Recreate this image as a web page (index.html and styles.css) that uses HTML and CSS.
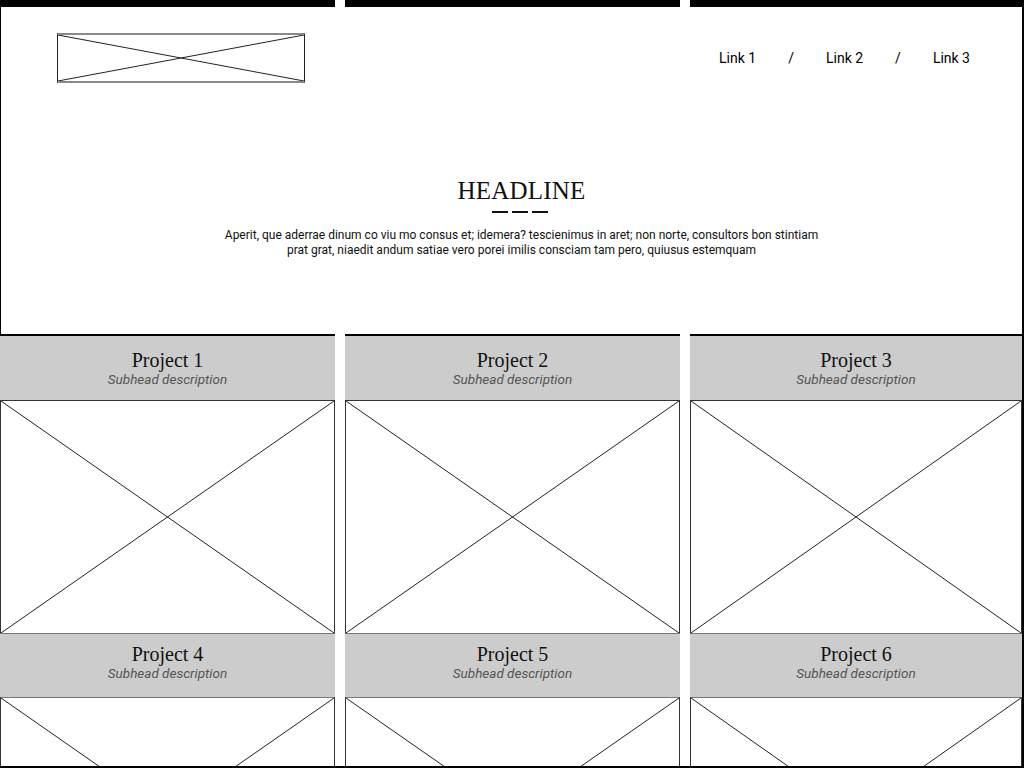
FILE: index.html
```html
<!DOCTYPE html>
<html lang="en">
<head>
    <meta charset="UTF-8">
    <meta name="viewport" content="width=device-width, initial-scale=1.0">
    <title>Portfolio Wireframe</title>
    <link rel="stylesheet" href="styles.css">
</head>
<body>
    <div class="frame">
        <div class="top-bars">
            <span></span>
            <span></span>
            <span></span>
        </div>
        <header class="hero">
            <div class="hero-top">
                <div class="logo">
                    <svg class="cross" viewBox="0 0 100 100" preserveAspectRatio="none">
                        <line x1="0" y1="0" x2="100" y2="100" />
                        <line x1="0" y1="100" x2="100" y2="0" />
                    </svg>
                </div>
                <nav class="nav">
                    <a href="#">Link 1</a>
                    <span class="sep">/</span>
                    <a href="#">Link 2</a>
                    <span class="sep">/</span>
                    <a href="#">Link 3</a>
                </nav>
            </div>
            <div class="intro">
                <h1>HEADLINE</h1>
                <div class="dashes"><span></span><span></span><span></span></div>
                <p>Aperit, que aderrae dinum co viu mo consus et; idemera? tescienimus in aret; non norte, consultors bon stintiam<br>prat grat, niaedit andum satiae vero porei imilis consciam tam pero, quiusus estemquam</p>
            </div>
        </header>
        <section class="projects">
            <div class="card">
                <div class="card-head">
                    <h2>Project 1</h2>
                    <p>Subhead description</p>
                </div>
                <div class="card-img">
                    <svg class="cross" viewBox="0 0 100 100" preserveAspectRatio="none"><line x1="0" y1="0" x2="100" y2="100" /><line x1="0" y1="100" x2="100" y2="0" /></svg>
                </div>
            </div>
            <div class="card">
                <div class="card-head">
                    <h2>Project 2</h2>
                    <p>Subhead description</p>
                </div>
                <div class="card-img">
                    <svg class="cross" viewBox="0 0 100 100" preserveAspectRatio="none"><line x1="0" y1="0" x2="100" y2="100" /><line x1="0" y1="100" x2="100" y2="0" /></svg>
                </div>
            </div>
            <div class="card">
                <div class="card-head">
                    <h2>Project 3</h2>
                    <p>Subhead description</p>
                </div>
                <div class="card-img">
                    <svg class="cross" viewBox="0 0 100 100" preserveAspectRatio="none"><line x1="0" y1="0" x2="100" y2="100" /><line x1="0" y1="100" x2="100" y2="0" /></svg>
                </div>
            </div>
            <div class="card">
                <div class="card-head">
                    <h2>Project 4</h2>
                    <p>Subhead description</p>
                </div>
                <div class="card-img">
                    <svg class="cross" viewBox="0 0 100 100" preserveAspectRatio="none"><line x1="0" y1="0" x2="100" y2="100" /><line x1="0" y1="100" x2="100" y2="0" /></svg>
                </div>
            </div>
            <div class="card">
                <div class="card-head">
                    <h2>Project 5</h2>
                    <p>Subhead description</p>
                </div>
                <div class="card-img">
                    <svg class="cross" viewBox="0 0 100 100" preserveAspectRatio="none"><line x1="0" y1="0" x2="100" y2="100" /><line x1="0" y1="100" x2="100" y2="0" /></svg>
                </div>
            </div>
            <div class="card">
                <div class="card-head">
                    <h2>Project 6</h2>
                    <p>Subhead description</p>
                </div>
                <div class="card-img">
                    <svg class="cross" viewBox="0 0 100 100" preserveAspectRatio="none"><line x1="0" y1="0" x2="100" y2="100" /><line x1="0" y1="100" x2="100" y2="0" /></svg>
                </div>
            </div>
        </section>
    </div>
</body>
</html>
```

FILE: styles.css
```css
body {
    margin: 0;
    background: #fff;
    color: #111;
    font-family: Roboto, "Liberation Sans", sans-serif;
}
.frame {
    width: 1024px;
    height: 768px;
    box-sizing: border-box;
    border-right: 2px solid #000;
    border-bottom: 2px solid #000;
    overflow: hidden;
}
.top-bars, .projects {
    display: grid;
    grid-template-columns: 335px 335px 1fr;
    column-gap: 10px;
}
.top-bars span {
    height: 7px;
    background: #000;
}
.hero {
    height: 327px;
    box-sizing: border-box;
    border-left: 1px solid #000;
    padding: 26px 52px 0 56px;
}
.hero-top {
    display: flex;
    justify-content: space-between;
    align-items: center;
}
.logo {
    width: 248px;
    height: 50px;
    box-sizing: border-box;
    border-left: 1px solid #222;
    border-right: 1px solid #222;
    border-top: 2px solid #8a8a8a;
    border-bottom: 2px solid #8a8a8a;
}
.cross {
    display: block;
    width: 100%;
    height: 100%;
}
.cross line {
    stroke: #222;
    stroke-width: 1;
    vector-effect: non-scaling-stroke;
}
.nav {
    display: flex;
    gap: 32px;
    font-size: 14px;
    line-height: 16px;
}
.nav a, .nav .sep {
    color: #000;
    text-decoration: none;
}
.intro {
    margin-top: 94px;
    padding-left: 16px;
    text-align: center;
}
.intro h1 {
    margin: 0;
    font-family: "Liberation Serif", serif;
    font-weight: normal;
    font-size: 25px;
    line-height: 28px;
    letter-spacing: 0.2px;
}
.dashes {
    display: flex;
    justify-content: center;
    gap: 4px;
    margin-top: 6px;
    padding-right: 4px;
}
.dashes span {
    width: 16px;
    height: 2px;
    background: #111;
}
.intro p {
    margin: 15px 0 0;
    font-size: 12px;
    line-height: 15px;
}
.card-head {
    height: 64px;
    box-sizing: border-box;
    padding-top: 9px;
    background: #ccc;
    border-top: 1px solid #777;
    text-align: center;
}
.card:nth-child(-n+3) .card-head {
    height: 66px;
    padding-top: 13px;
    border-top: 2px solid #000;
}
.card-head h2 {
    margin: 0;
    font-family: "Liberation Serif", serif;
    font-weight: normal;
    font-size: 20px;
    line-height: 22px;
}
.card-head p {
    margin: 0;
    font-size: 13.5px;
    line-height: 16px;
    font-style: italic;
    color: #555;
}
.card-img {
    height: 232px;
    border: 1px solid #333;
    border-bottom: none;
}
.card:nth-child(n+4) .card-img {
    border-top-color: #777;
}
```
